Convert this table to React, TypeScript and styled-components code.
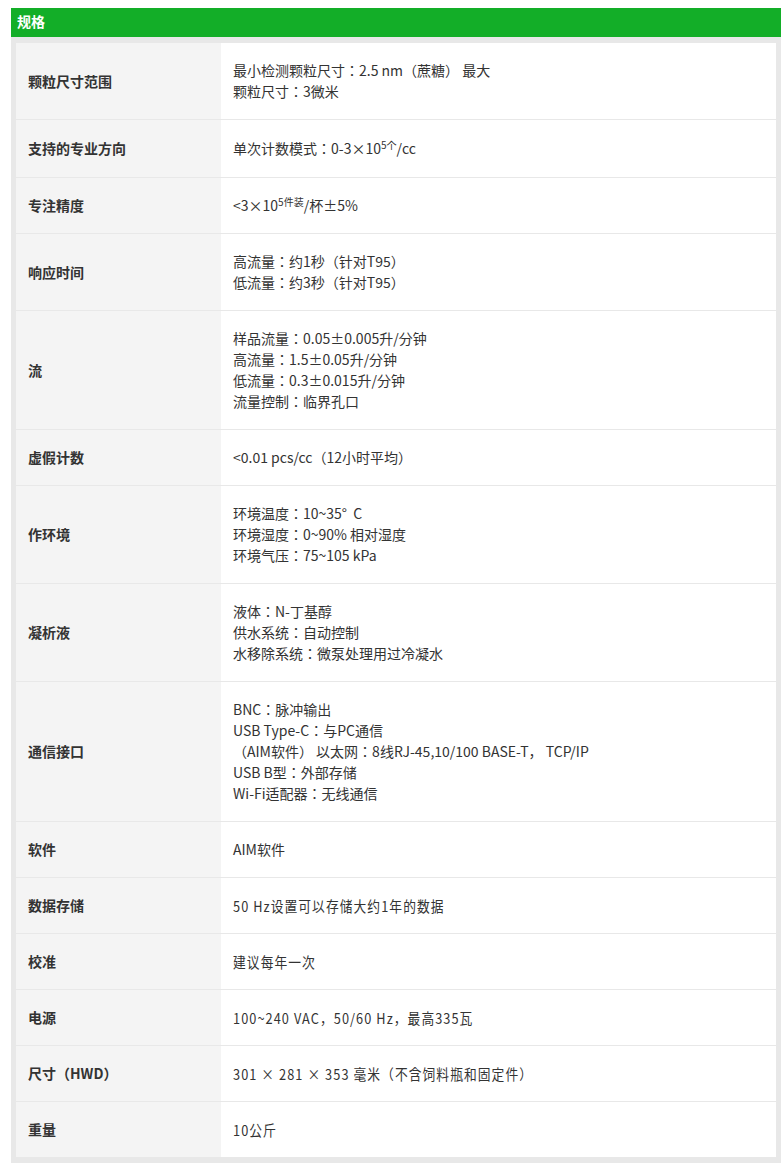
import React from "react";
import styled, { createGlobalStyle } from "styled-components";

const Global = createGlobalStyle`
  html, body { margin: 0; padding: 0; background: #ffffff; }
  body {
    font-family: "Noto Sans CJK JP", "Noto Sans CJK SC", "Noto Sans", sans-serif;
    color: #333333;
  }
`;

const Page = styled.div`
  padding: 8px 3px 8px 11px;
  width: 770px;
`;

const TitleBar = styled.div`
  background: #13ae28;
  color: #ffffff;
  font-weight: 700;
  font-size: 14px;
  height: 29px;
  line-height: 27px;
  padding-left: 6px;
`;

const Frame = styled.div`
  background: #e8e8e8;
  padding: 6px 5px 6px 5px;
`;

const Table = styled.div`
  display: grid;
  grid-template-columns: 205px 1fr;
  background: #ffffff;
`;

const Label = styled.div<{ $first?: boolean }>`
  background: #f4f4f4;
  font-weight: 700;
  font-size: 14px;
  line-height: 21px;
  padding: 17px 12px;
  display: flex;
  align-items: center;
  border-top: ${(p) => (p.$first ? "none" : "1px solid #e8e8e8")};
`;

const Value = styled.div<{ $first?: boolean }>`
  background: #ffffff;
  font-size: 14px;
  line-height: 21px;
  padding: 17px 12px;
  display: flex;
  flex-direction: column;
  justify-content: center;
  align-items: flex-start;
  border-top: ${(p) => (p.$first ? "none" : "1px solid #e8e8e8")};
`;

const Line = styled.div<{ $narrow?: boolean; $tall?: boolean }>`
  white-space: pre;
  min-height: ${(p) => (p.$tall ? "23px" : "21px")};
  line-height: ${(p) => (p.$tall ? "23px" : "21px")};
  font-size: ${(p) => (p.$narrow ? "14.5px" : "14px")};
  letter-spacing: ${(p) => (p.$narrow ? "1.2px" : "0")};
  transform: ${(p) => (p.$narrow ? "scaleX(0.88)" : "none")};
  transform-origin: left center;
`;

const Sup = styled.sup`
  font-size: 10px;
  line-height: 0;
  vertical-align: 5px;
`;

type Row = { label: string; lines: React.ReactNode[]; narrow?: boolean; tall?: boolean };

const rows: Row[] = [
  { label: "颗粒尺寸范围", lines: ["最小检测颗粒尺寸：2.5 nm（蔗糖） 最大", "颗粒尺寸：3微米"] },
  {
    label: "支持的专业方向",
    tall: true,
    lines: [
      <>
        单次计数模式：0-3×10<Sup>5个</Sup>/cc
      </>,
    ],
  },
  {
    label: "专注精度",
    lines: [
      <>
        &lt;3×10<Sup>5件装</Sup>/杯±5%
      </>,
    ],
  },
  { label: "响应时间", lines: ["高流量：约1秒（针对T95）", "低流量：约3秒（针对T95）"] },
  {
    label: "流",
    lines: [
      "样品流量：0.05±0.005升/分钟",
      "高流量：1.5±0.05升/分钟",
      "低流量：0.3±0.015升/分钟",
      "流量控制：临界孔口",
    ],
  },
  { label: "虚假计数", lines: ["<0.01 pcs/cc（12小时平均）"] },
  {
    label: "作环境",
    lines: ["环境温度：10~35°  C", "环境湿度：0~90% 相对湿度", "环境气压：75~105 kPa"],
  },
  {
    label: "凝析液",
    lines: ["液体：N-丁基醇", "供水系统：自动控制", "水移除系统：微泵处理用过冷凝水"],
  },
  {
    label: "通信接口",
    lines: [
      "BNC：脉冲输出",
      "USB Type-C：与PC通信",
      "（AIM软件） 以太网：8线RJ-45,10/100 BASE-T， TCP/IP",
      "USB B型：外部存储",
      "Wi-Fi适配器：无线通信",
    ],
  },
  { label: "软件", lines: ["AIM软件"] },
  { label: "数据存储", lines: ["50 Hz设置可以存储大约1年的数据"], narrow: true },
  { label: "校准", lines: ["建议每年一次"], narrow: true },
  { label: "电源", lines: ["100~240 VAC，50/60 Hz，最高335瓦"], narrow: true },
  { label: "尺寸（HWD）", lines: ["301 × 281 × 353 毫米（不含饲料瓶和固定件）"], narrow: true },
  { label: "重量", lines: ["10公斤"], narrow: true },
];

export default function App() {
  return (
    <Page>
      <Global />
      <TitleBar>规格</TitleBar>
      <Frame>
        <Table>
          {rows.map((r, i) => (
            <React.Fragment key={r.label}>
              <Label $first={i === 0}>{r.label}</Label>
              <Value $first={i === 0}>
                {r.lines.map((l, j) => (
                  <Line key={j} $narrow={r.narrow} $tall={r.tall}>
                    {l}
                  </Line>
                ))}
              </Value>
            </React.Fragment>
          ))}
        </Table>
      </Frame>
    </Page>
  );
}
